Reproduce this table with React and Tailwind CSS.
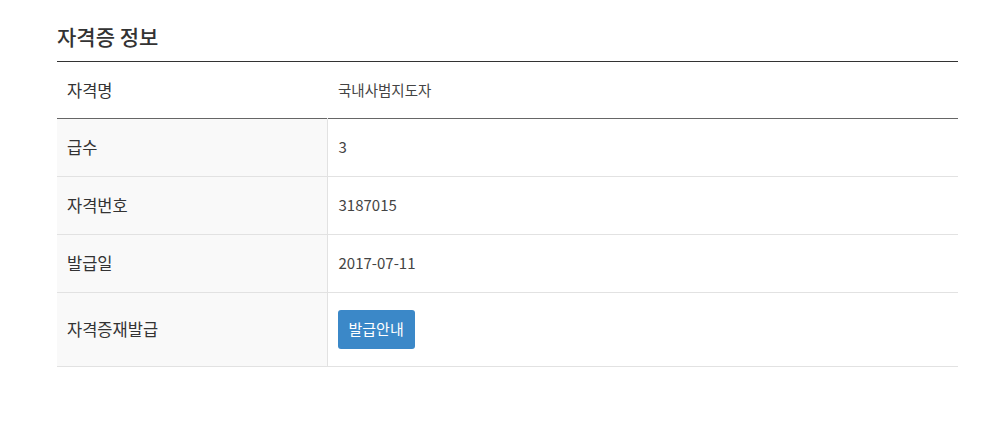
import React from "react";

const rows = [
  { label: "급수", value: "3" },
  { label: "자격번호", value: "3187015" },
  { label: "발급일", value: "2017-07-11" },
];

const App = () => {
  return (
    <div
      className="min-h-screen bg-white px-[57px] pt-[21px] text-[#333]"
      style={{ fontFamily: '"Noto Sans CJK KR", "Noto Sans", sans-serif' }}
    >
      {/* 제목 */}
      <h2 className="text-[21px] leading-[30px] font-medium text-[#333] mb-[10px]">
        자격증 정보
      </h2>

      <table className="w-[901px] border-collapse border-t border-[#333]">
        <tbody>
          {/* 자격명 */}
          <tr className="h-[57px] border-b border-[#666]">
            <td className="w-[270px] pl-[10px] text-[16.5px] text-[#333]">자격명</td>
            <td className="pl-[11px] text-[14.5px] text-[#444]">국내사범지도자</td>
          </tr>
          {rows.map((row) => (
            <tr key={row.label} className="h-[58px] border-b border-[#e2e2e2]">
              <td className="w-[270px] bg-[#f9f9f9] pl-[10px] text-[16.5px] text-[#333] border-r border-[#e2e2e2]">
                {row.label}
              </td>
              <td className="pl-[11px] text-[15px] text-[#444]">{row.value}</td>
            </tr>
          ))}
          <tr className="h-[74px] border-b border-[#e2e2e2]">
            <td className="w-[270px] bg-[#f9f9f9] pl-[10px] text-[16.5px] text-[#333] border-r border-[#e2e2e2]">
              자격증재발급
            </td>
            <td className="pl-[10px]">
              <button className="h-[39px] px-[11px] rounded-[3px] bg-[#3b88c8] text-[15px] text-white">
                발급안내
              </button>
            </td>
          </tr>
        </tbody>
      </table>
    </div>
  );
};

export default App;
